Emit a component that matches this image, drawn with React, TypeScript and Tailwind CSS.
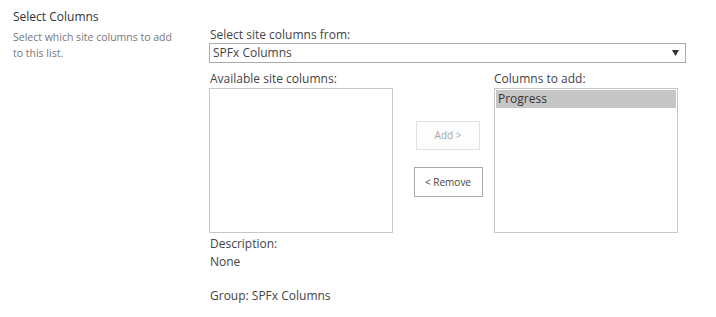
import React from "react";

export default function App() {
  return (
    <div className="w-[716px] h-[317px] bg-white flex text-[#444]" style={{ fontFamily: '"Open Sans", "Noto Sans", sans-serif' }}>
      <div className="w-[209px] shrink-0 pl-[13px] pt-[8px]">
        <div className="text-[12px] leading-[18px] text-[#333]">Select Columns</div>
        <div className="mt-[3px] text-[10.5px] leading-[16px] text-[#777] w-[170px]">
          Select which site columns to add to this list.
        </div>
      </div>
      <div className="pt-[26px] flex flex-col text-[12px]">
        <div className="leading-[17px] h-[17px] pl-[1px]">Select site columns from:</div>
        <div className="w-[477px] h-[20px] border border-[#ababab] flex items-center justify-between pl-[3px] pr-[6px]">
          <span className="leading-[18px]">SPFx Columns</span>
          <svg width="7" height="6" viewBox="0 0 7 6"><path d="M0 0h7L3.5 6z" fill="#333" /></svg>
        </div>
        <div className="grid grid-cols-[184px_101px_184px] mt-[7px]">
          <div className="leading-[18px] h-[18px] pl-[1px]">Available site columns:</div>
          <div />
          <div className="leading-[18px] h-[18px]">Columns to add:</div>
          <div className="h-[145px] border border-[#c6c6c6] bg-white" />
          <div className="flex flex-col items-center pl-[9px] pt-[33px]">
            <button className="w-[64px] h-[29px] border border-[#e1e1e1] bg-[#fdfdfd] text-[#a6a6a6] text-[10px]">Add &gt;</button>
            <button className="mt-[17px] w-[69px] h-[30px] border border-[#ababab] bg-white text-[#444] text-[10px]">&lt; Remove</button>
          </div>
          <div className="h-[145px] border border-[#c6c6c6] p-[1px]">
            <div className="h-[18px] bg-[#c6c6c6] leading-[18px] pl-[2px] text-[#333]">Progress</div>
          </div>
        </div>
        <div className="leading-[18px] pl-[1px] mt-[2px]">Description:</div>
        <div className="leading-[18px] pl-[1px]">None</div>
        <div className="leading-[18px] pl-[1px] mt-[16px]">Group: SPFx Columns</div>
      </div>
    </div>
  );
}
